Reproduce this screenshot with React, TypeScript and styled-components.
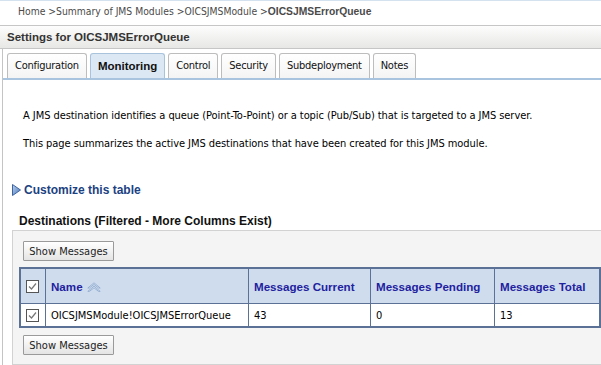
import React from 'react';
import styled, { createGlobalStyle } from 'styled-components';

const Global = createGlobalStyle`
  body {
    margin: 0;
    background: #fff;
    font-family: "DejaVu Sans Condensed", "DejaVu Sans", sans-serif;
    font-stretch: condensed;
    font-size: 11px;
    color: #000;
  }
`;

// bold labels look closer to the original width in Liberation Sans
const boldFont = `"Liberation Sans", Arial, sans-serif`;

const Page = styled.div`
  width: 601px;
  height: 365px;
  overflow: hidden;
`;

const Breadcrumb = styled.div`
  height: 24px;
  border-top: 1px solid #d4e2f0;
  padding-left: 18px;
  line-height: 21px;
  font-size: 10.3px;
  color: #4a4a4a;
  white-space: nowrap;
  b {
    font-family: ${boldFont};
    font-size: 10.3px;
    color: #4a4a4a;
  }
`;

const SettingsHeader = styled.div`
  height: 22px;
  border-top: 1px solid #c6c6c6;
  border-bottom: 1px solid #c6c6c6;
  background: linear-gradient(#fdfdfd, #e7e7e5);
  padding-left: 7px;
  line-height: 22px;
  font-family: ${boldFont};
  font-weight: bold;
  font-size: 11.5px;
  color: #333;
`;

const Content = styled.div`
  margin-left: 2px;
  border-left: 1px solid #c4c4c4;
  height: 316px;
`;

const Tabs = styled.div`
  display: flex;
  gap: 3px;
  padding: 3px 0 0 4px;
  border-bottom: 2px solid #a8c4de;
  height: 26px;
  align-items: flex-end;
`;

const Tab = styled.div<{ $active?: boolean }>`
  height: 25px;
  box-sizing: border-box;
  padding: 0 7px;
  line-height: 24px;
  border: 1px solid ${(p) => (p.$active ? '#a9c3dc' : '#bdbdbd')};
  border-bottom: none;
  border-radius: 3px 3px 0 0;
  background: ${(p) => (p.$active ? '#dce8f3' : 'linear-gradient(#ffffff, #f4f4f4)')};
  font-family: ${(p) => (p.$active ? boldFont : 'inherit')};
  font-weight: ${(p) => (p.$active ? 'bold' : 'normal')};
  font-size: ${(p) => (p.$active ? '11.5px' : '11px')};
  letter-spacing: ${(p) => (p.$active ? '0' : '-0.25px')};
  color: #111;
  white-space: nowrap;
`;

const Intro = styled.div`
  padding: 29px 0 0 20px;
  p {
    margin: 0 0 14px;
    line-height: 14px;
    letter-spacing: -0.06px;
  }
`;

const Customize = styled.div`
  display: flex;
  align-items: center;
  gap: 3px;
  margin: 32px 0 0 9px;
  font-family: ${boldFont};
  font-weight: bold;
  font-size: 12px;
  color: #1b4282;
`;

const SectionTitle = styled.div`
  margin: 17px 0 0 16px;
  font-family: ${boldFont};
  font-weight: bold;
  font-size: 12px;
  color: #111;
`;

const Panel = styled.div`
  margin: 2px 0 0 9px;
  background: #f4f4f4;
  border: 1px solid #d2d2d2;
  border-right: none;
  padding: 10px 0 9px 6px;
  display: flex;
  flex-direction: column;
  align-items: flex-start;
`;

const Button = styled.button<{ $top?: number }>`
  margin: ${(p) => p.$top ?? 0}px 0 0 4px;
  height: 20px;
  width: 91px;
  border: 1px solid #9a9a9a;
  border-radius: 1px;
  background: linear-gradient(#ffffff, #e4e4e4);
  font-family: "DejaVu Sans Condensed", "DejaVu Sans", sans-serif;
  font-stretch: condensed;
  font-size: 11px;
  color: #222;
  padding: 0;
`;

const Table = styled.table`
  margin-top: 6px;
  border-collapse: collapse;
  width: 582px;
  border: 2px solid #5b7196;
  th,
  td {
    border: 1px solid #5b7196;
    text-align: left;
    padding: 0 5px;
    white-space: nowrap;
  }
  th {
    background: #cfdcee;
    height: 34px;
    color: #22229e;
    font-family: ${boldFont};
    font-weight: bold;
    font-size: 11.6px;
  }
  td {
    background: #fff;
    height: 22px;
  }
`;

const CheckCell = styled.th`
  width: 14px;
  && {
    padding: 0 5px;
  }
`;

const CheckBox = () => (
  <svg width="13" height="13" viewBox="0 0 13 13" style={{ display: 'block' }}>
    <rect x="0.5" y="0.5" width="12" height="12" fill="#fff" stroke="#555" />
    <path d="M3 6.5 L5.5 9 L10 3.5" fill="none" stroke="#777" strokeWidth="1.2" />
  </svg>
);

const SortIcon = () => (
  <svg width="14" height="10" viewBox="0 0 14 10" style={{ marginLeft: 4, verticalAlign: -1 }}>
    <path d="M0.8 6 L7 0.8 L13.2 6 L11.6 6 L7 2.4 L2.4 6 Z" fill="#dbe6f4" stroke="#8aa7cc" strokeWidth="0.8" />
    <path d="M0.8 9.4 L7 4.2 L13.2 9.4 L11.6 9.4 L7 5.8 L2.4 9.4 Z" fill="#dbe6f4" stroke="#8aa7cc" strokeWidth="0.8" />
  </svg>
);

const Triangle = () => (
  <svg width="9" height="12" viewBox="0 0 9 12">
    <defs>
      <linearGradient id="tg" x1="0" y1="0" x2="1" y2="1">
        <stop offset="0" stopColor="#b9d0ee" />
        <stop offset="1" stopColor="#4c78b8" />
      </linearGradient>
    </defs>
    <path d="M0.5 0.5 L8.5 6 L0.5 11.5 Z" fill="url(#tg)" stroke="#3d64a0" />
  </svg>
);

const App = () => {
  return (
    <Page>
      <Global />
      <Breadcrumb>
        Home &gt;Summary of JMS Modules &gt;OICSJMSModule &gt;<b>OICSJMSErrorQueue</b>
      </Breadcrumb>
      <SettingsHeader>Settings for OICSJMSErrorQueue</SettingsHeader>
      <Content>
        <Tabs>
          <Tab>Configuration</Tab>
          <Tab $active>Monitoring</Tab>
          <Tab>Control</Tab>
          <Tab>Security</Tab>
          <Tab>Subdeployment</Tab>
          <Tab>Notes</Tab>
        </Tabs>
        <Intro>
          <p>
            A JMS destination identifies a queue (Point-To-Point) or a topic (Pub/Sub) that is
            targeted to a JMS server.
          </p>
          <p>This page summarizes the active JMS destinations that have been created for this JMS module.</p>
        </Intro>
        <Customize>
          <Triangle />
          Customize this table
        </Customize>
        <SectionTitle>Destinations (Filtered - More Columns Exist)</SectionTitle>
        <Panel>
          <Button>Show Messages</Button>
          <Table>
            <thead>
              <tr>
                <CheckCell>
                  <CheckBox />
                </CheckCell>
                <th style={{ width: 192 }}>
                  Name
                  <SortIcon />
                </th>
                <th style={{ width: 111 }}>Messages Current</th>
                <th style={{ width: 113 }}>Messages Pending</th>
                <th>Messages Total</th>
              </tr>
            </thead>
            <tbody>
              <tr>
                <td>
                  <CheckBox />
                </td>
                <td>OICSJMSModule!OICSJMSErrorQueue</td>
                <td>43</td>
                <td>0</td>
                <td>13</td>
              </tr>
            </tbody>
          </Table>
          <Button $top={7}>Show Messages</Button>
        </Panel>
      </Content>
    </Page>
  );
};

export default App;
